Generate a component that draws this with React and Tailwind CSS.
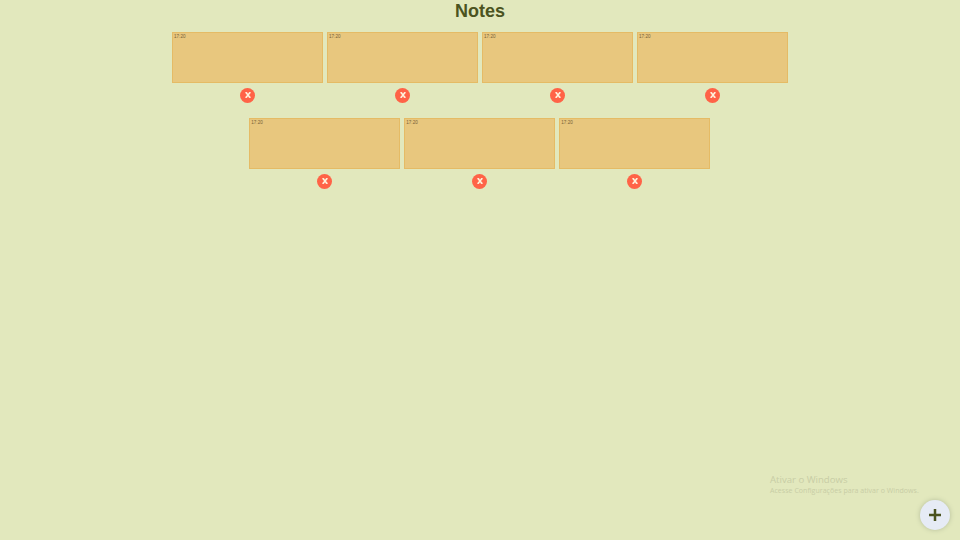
const rows = [
  ["17:20", "17:20", "17:20", "17:20"],
  ["17:20", "17:20", "17:20"],
];

function Note({ text }) {
  return (
    <article className="flex w-[151px] flex-col items-center">
      <div className="h-[51px] w-full border border-[#e5bb65] bg-[#e8c77e] px-px pt-px font-['Liberation_Sans',sans-serif] text-[4.6px] leading-[5px] text-[#776138]">
        {text}
      </div>
      <button className="mt-[4.5px] flex size-[15px] items-center justify-center rounded-full bg-[#ff6347]" aria-label="Delete">
        <svg className="h-[6px] w-[6px]" viewBox="0 0 6 6" fill="none" stroke="#fff3dc" strokeWidth="1.6">
          <path d="M1 .6 5 5.4M5 .6 1 5.4" />
          <path d="M.2 .6h2M3.9 .6h1.9M.2 5.4h1.9M3.8 5.4h2" strokeWidth="0.8" />
        </svg>
      </button>
    </article>
  );
}

export default function App() {
  return (
    <main className="flex h-[540px] w-full flex-col overflow-hidden bg-[#e2e8bd] font-['Liberation_Sans',sans-serif]">
      <h1 className="h-8 text-center text-[18px] leading-[22px] font-bold text-[#4b5320]">Notes</h1>
      <section className="flex flex-col gap-[15.5px]">
        {rows.map((row, index) => (
          <div key={index} className="flex justify-center gap-1 even:pr-[0.5px]">
            {row.map((text, noteIndex) => (
              <Note key={noteIndex} text={text} />
            ))}
          </div>
        ))}
      </section>
      <footer className="mt-auto flex items-end justify-end pr-[10px] pb-[10px]">
        <div className="mb-[34px] -mr-[1px] w-[151px] font-['Open_Sans',sans-serif] text-[#c8cda5]">
          <p className="text-[9.6px] leading-[12px]">Ativar o Windows</p>
          <p className="text-[7px] leading-[10px] tracking-[0.005em] whitespace-nowrap">Acesse Configurações para ativar o Windows.</p>
        </div>
        <button className="flex size-[30px] items-center justify-center rounded-full bg-[#e6ebf5] shadow-[0_0_5px_#b5bd9a]" aria-label="Add note">
          <svg className="size-3" viewBox="0 0 12 12" fill="none" stroke="#4b5320" strokeWidth="2.5">
            <path d="M6 0v12M0 6h12" />
          </svg>
        </button>
      </footer>
    </main>
  );
}
